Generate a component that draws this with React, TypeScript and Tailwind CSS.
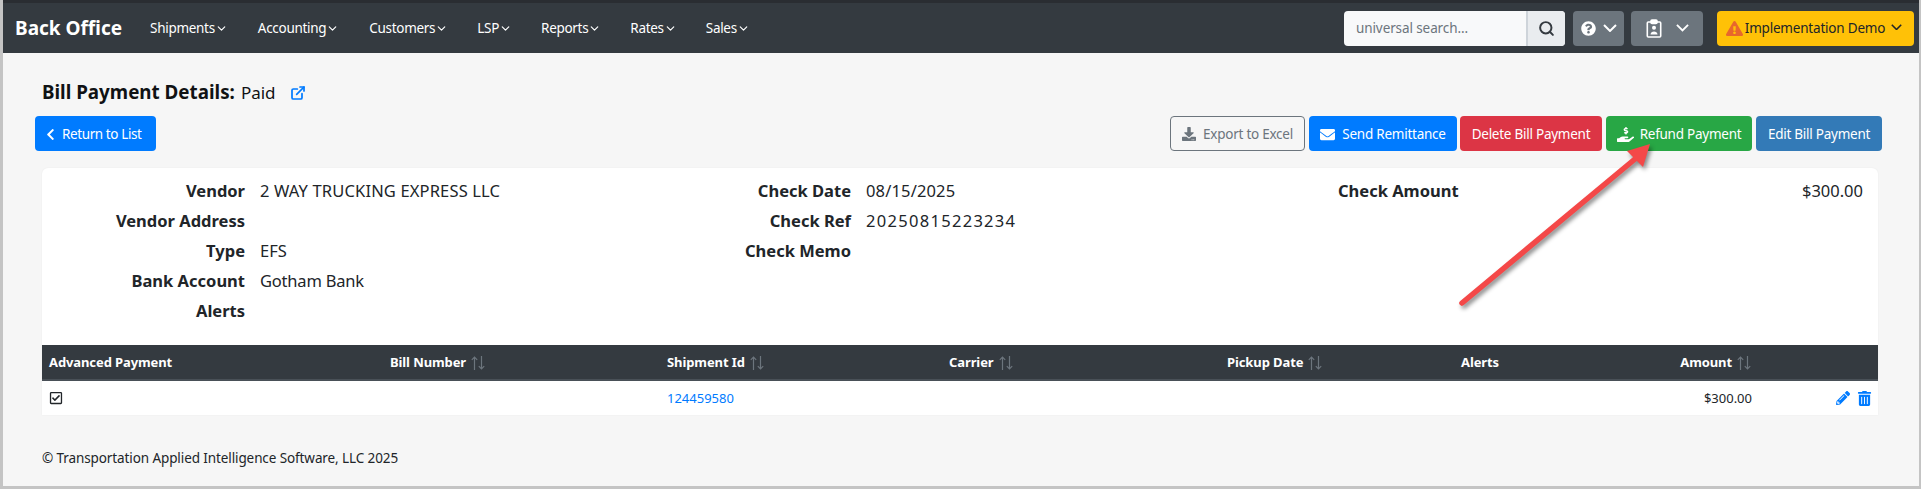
import React from "react";
import { FaChevronLeft, FaQuestionCircle, FaExclamationTriangle, FaDownload, FaEnvelope, FaHandHoldingUsd, FaPencilAlt, FaTrashAlt, FaRegCheckSquare } from "react-icons/fa";
import { ExternalLink, ChevronDown, Search } from "lucide-react";

const nav = [
  ["Shipments", "ml-[16px]"],
  ["Accounting", "ml-[30px]"],
  ["Customers", "ml-[30px]"],
  ["LSP", "ml-[29px]"],
  ["Reports", "ml-[29px]"],
  ["Rates", "ml-[29px]"],
  ["Sales", "ml-[29px]"],
];

function Sort() {
  return (
    <svg width="16" height="16" viewBox="0 0 16 16" className="ml-[4px] text-[#6c757d]" fill="none" stroke="currentColor" strokeWidth="1.2">
      <path d="M4.5 15V2M1.8 4.8 4.5 2l2.7 2.8" />
      <path d="M11.5 1v13M8.8 11.2l2.7 2.8 2.7-2.8" />
    </svg>
  );
}

function Chev({ w = 14 }: { w?: number }) {
  return (
    <svg width={w} height={w * 0.6} viewBox="0 0 14 8.4" fill="none" stroke="currentColor" strokeWidth="2">
      <path d="M1 1l6 6 6-6" />
    </svg>
  );
}

function Row({ label, value, vc = "" }: { label: string; value?: string; vc?: string }) {
  return (
    <div className="flex h-[30px] items-center">
      <div className="w-[203px] text-right text-[16.5px] font-bold text-[#212529]">{label}</div>
      {value && <div className={`ml-[15px] text-[16.5px] text-[#212529] ${vc}`}>{value}</div>}
    </div>
  );
}

export default function App() {
  return (
    <div className="h-[489px] w-[1921px] overflow-hidden bg-[#c4c4c4] pr-[2px] pb-[3px] pl-[3px] font-['Noto_Sans',sans-serif]">
      <div className="relative h-full bg-[#f6f6f6]">
        <div className="h-[3px] bg-[#2a2d32]" />
        <header className="flex h-[50px] items-center bg-[#343a40] pr-[5px] pl-[12px] text-white">
          <span className="text-[19px] font-bold">Back Office</span>
          <nav className="ml-[12px] flex items-center text-[13.5px] tracking-[-0.3px]">
            {nav.map(([n, c]) => (
              <span key={n} className={`flex items-center ${c}`}>
                {n}
                <ChevronDown size={13} strokeWidth={2.2} />
              </span>
            ))}
          </nav>
          <div className="ml-auto flex items-center">
            <div className="flex h-[35px] w-[221px] overflow-hidden rounded-[4px] bg-[#f8f9fa]">
              <div className="flex flex-1 items-center pl-[12px] text-[13.5px] tracking-[-0.1px] text-[#6c757d]">universal search...</div>
              <div className="flex w-[39px] items-center justify-center border-l-2 border-[#ced4da] bg-[#e9ecef] text-[#343a40]">
                <Search size={17} strokeWidth={2.8} />
              </div>
            </div>
            <div className="ml-[8px] flex h-[35px] w-[51px] items-center justify-center gap-[7px] rounded-[4px] bg-[#6c757d]">
              <FaQuestionCircle size={15} />
              <Chev w={14} />
            </div>
            <div className="ml-[7px] flex h-[35px] w-[72px] items-center justify-center gap-[14px] rounded-[4px] bg-[#6c757d]">
              <svg width="16" height="19" viewBox="0 0 16 19" fill="none" stroke="white" strokeWidth="1.6">
                <rect x="1.3" y="3" width="13.4" height="15" rx="1" />
                <rect x="5" y="1" width="6" height="3.5" rx="1" fill="white" />
                <circle cx="8" cy="8.8" r="2" fill="white" stroke="none" />
                <path d="M4.5 15.5c0-4 7-4 7 0z" fill="white" stroke="none" />
              </svg>
              <Chev w={13} />
            </div>
            <div className="ml-[14px] flex h-[35px] w-[197px] items-center justify-center rounded-[4px] bg-[#ffc107] pr-[3px] text-[13.5px] tracking-[-0.2px] text-[#212529]">
              <FaExclamationTriangle size={17} className="mr-[2px] text-[#e8672c]" />
              Implementation Demo
              <span className="mb-[2px] ml-[6px]"><Chev w={11} /></span>
            </div>
          </div>
        </header>

        <main className="pt-[26px] pl-[32px]">
          <div className="flex h-[27px] items-center pl-[7px] text-[#101214]">
            <span className="text-[18.8px] font-bold">Bill Payment Details:</span>
            <span className="ml-[6px] text-[17px]">Paid</span>
            <ExternalLink size={16} strokeWidth={2.6} className="ml-[14px] text-[#007bff]" />
          </div>

          <div className="mt-[10px] flex h-[35px] items-stretch pr-[37px] text-[13.5px] tracking-[-0.25px]">
            <button className="flex w-[121px] items-center rounded-[4px] bg-[#007bff] pt-[1px] pl-[9px] tracking-[-0.4px] text-white">
              <FaChevronLeft size={13} className="mr-[5px]" />
              Return to List
            </button>
            <button className="ml-auto flex w-[135px] items-center justify-center rounded-[4px] border border-[#6c757d] pt-[1px] text-[#6c757d]">
              <FaDownload size={14} className="mr-[7px]" />
              Export to Excel
            </button>
            <button className="ml-[4px] flex w-[148px] items-center justify-center rounded-[4px] bg-[#007bff] pt-[1px] text-white">
              <FaEnvelope size={15} className="mr-[7px]" />
              Send Remittance
            </button>
            <button className="ml-[3px] flex w-[142px] items-center justify-center rounded-[4px] bg-[#dc3545] pt-[1px] text-white">Delete Bill Payment</button>
            <button className="ml-[4px] flex w-[146px] items-center justify-center rounded-[4px] bg-[#28a745] pt-[1px] text-white">
              <FaHandHoldingUsd size={17} className="mr-[6px]" />
              Refund Payment
            </button>
            <button className="ml-[4px] flex w-[126px] items-center justify-center rounded-[4px] bg-[#337ab7] pt-[1px] text-white">Edit Bill Payment</button>
          </div>

          <section className="mt-[17px] mr-[41px] ml-[7px] rounded-t-[6px] bg-white shadow-[0_0_2px_rgba(0,0,0,0.06)]">
            <div className="grid h-[177px] grid-cols-[606px_608px_1fr] pt-[8px]">
              <div>
                <Row label="Vendor" value="2 WAY TRUCKING EXPRESS LLC" vc="tracking-[0.15px]" />
                <Row label="Vendor Address" />
                <Row label="Type" value="EFS" />
                <Row label="Bank Account" value="Gotham Bank" vc="tracking-[-0.2px]" />
                <Row label="Alerts" />
              </div>
              <div>
                <Row label="Check Date" value="08/15/2025" vc="tracking-[0.15px]" />
                <Row label="Check Ref" value="20250815223234" vc="tracking-[1.3px]" />
                <Row label="Check Memo" />
              </div>
              <div className="flex h-[30px] items-center justify-between pr-[15px] text-[16.5px] text-[#212529]">
                <span className="ml-[82px] font-bold">Check Amount</span>
                <span>$300.00</span>
              </div>
            </div>

            <div className="flex h-[36px] items-center border-b-2 border-[#495057] bg-[#343a40] pt-[1px] text-[13px] font-bold tracking-[-0.1px] text-white">
              <div className="w-[348px] pl-[7px]">Advanced Payment</div>
              <div className="flex w-[277px] items-center">Bill Number<Sort /></div>
              <div className="flex w-[282px] items-center">Shipment Id<Sort /></div>
              <div className="flex w-[278px] items-center">Carrier<Sort /></div>
              <div className="flex w-[234px] items-center">Pickup Date<Sort /></div>
              <div className="w-[200px]">Alerts</div>
              <div className="flex w-[91px] items-center justify-end">Amount<Sort /></div>
            </div>
            <div className="flex h-[34px] items-center text-[13px] text-[#212529]">
              <div className="w-[625px] pl-[7px]"><FaRegCheckSquare size={14} /></div>
              <div className="w-[907px] pt-[2px] text-[#007bff]">124459580</div>
              <div className="w-[178px] pt-[2px] text-right">$300.00</div>
              <div className="ml-auto flex items-center gap-[7px] pr-[6px] text-[#007bff]">
                <FaPencilAlt size={14} />
                <FaTrashAlt size={15} />
              </div>
            </div>
          </section>

          <footer className="mt-[33px] pl-[7px] text-[13.5px] tracking-[-0.1px] text-[#212529]">© Transportation Applied Intelligence Software, LLC 2025</footer>
        </main>

        <svg className="pointer-events-none absolute top-[140px] left-[1440px]" width="220" height="180" viewBox="0 0 220 180" fill="none">
          <g className="drop-shadow-[2px_3px_2px_rgba(0,0,0,0.45)]">
            <path d="M19 163 192 19" stroke="#f44848" strokeWidth="5.5" strokeLinecap="round" />
            <path d="M207 4 184 11 200 27Z" fill="#f44848" />
          </g>
        </svg>
      </div>
    </div>
  );
}
